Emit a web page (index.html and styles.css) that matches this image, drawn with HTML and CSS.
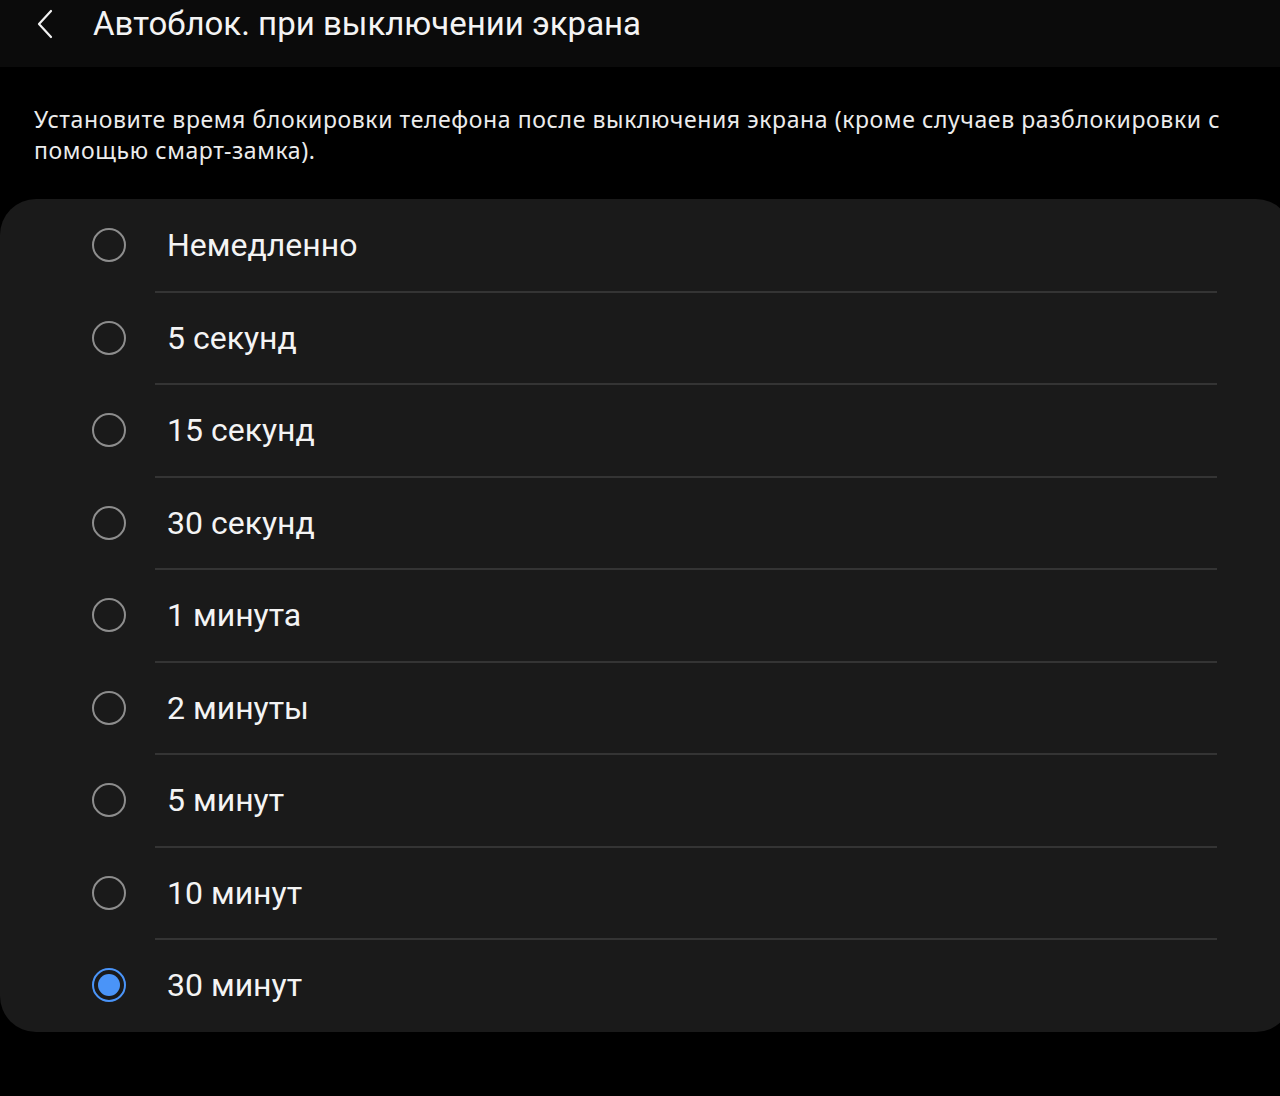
FILE: index.html
```html
<!DOCTYPE html>
<html lang="ru">
<head>
    <meta charset="UTF-8">
    <meta name="viewport" content="width=device-width, initial-scale=1.0">
    <title>Автоблок. при выключении экрана</title>
    <link rel="stylesheet" href="styles.css">
</head>
<body>
    <div class="header">
        <button class="back" aria-label="Назад">
            <svg width="20" height="30" viewBox="0 0 20 30">
                <path d="M16 2 L4 15 L16 28" fill="none" stroke="#f2f2f2" stroke-width="2.2" stroke-linecap="round" stroke-linejoin="round"/>
            </svg>
        </button>
        <h1>Автоблок. при выключении экрана</h1>
    </div>

    <p class="description">Установите время блокировки телефона после выключения экрана (кроме случаев разблокировки с помощью смарт-замка).</p>

    <div class="card">
        <label class="option"><span class="radio"></span><span class="label">Немедленно</span></label>
        <label class="option"><span class="radio"></span><span class="label">5 секунд</span></label>
        <label class="option"><span class="radio"></span><span class="label">15 секунд</span></label>
        <label class="option"><span class="radio"></span><span class="label">30 секунд</span></label>
        <label class="option"><span class="radio"></span><span class="label">1 минута</span></label>
        <label class="option"><span class="radio"></span><span class="label">2 минуты</span></label>
        <label class="option"><span class="radio"></span><span class="label">5 минут</span></label>
        <label class="option"><span class="radio"></span><span class="label">10 минут</span></label>
        <label class="option checked"><span class="radio"></span><span class="label">30 минут</span></label>
    </div>
</body>
</html>
```

FILE: styles.css
```css
:root {
    --background-color: #000000;
    --header-background: #0b0b0b;
    --card-background: #1a1a1a;
    --divider: #343434;
    --text: #f4f4f4;
    --accent: #4a94f8;
}

body {
    font-family: Roboto, "Noto Sans", sans-serif;
    margin: 0;
    padding: 0;
    background-color: var(--background-color);
    color: var(--text);
    overflow: hidden;
}

.header {
    height: 67px;
    background: var(--header-background);
    display: flex;
    align-items: center;
    padding-left: 35px;
    box-sizing: border-box;
}

.header .back {
    background: none;
    border: none;
    padding: 0;
    margin: 0 38px 0 0;
    width: 20px;
    height: 30px;
    margin-top: -20px;
    cursor: pointer;
}

.header h1 {
    font-size: 33px;
    font-weight: 400;
    margin: -20px 0 0 0;
}

.description {
    margin: 0;
    padding: 37px 40px 0 34px;
    height: 95px;
    font-family: "Noto Sans", Roboto, sans-serif;
    font-size: 23px;
    letter-spacing: 0.6px;
    line-height: 31px;
    color: #ececec;
}

.card {
    background: var(--card-background);
    border-radius: 36px;
    width: calc(100% + 12px);
}

.option {
    height: 92.5px;
    display: flex;
    align-items: center;
    padding-left: 92px;
    position: relative;
    cursor: pointer;
}

.option + .option::before {
    content: "";
    position: absolute;
    top: -1px;
    left: 155px;
    right: 75px;
    height: 2px;
    background: var(--divider);
}

.radio {
    width: 34px;
    height: 34px;
    box-sizing: border-box;
    border: 2px solid #8d8d8d;
    border-radius: 50%;
    margin-right: 41px;
    display: flex;
    align-items: center;
    justify-content: center;
}

.option.checked .radio {
    border-color: var(--accent);
}

.option.checked .radio::after {
    content: "";
    width: 22px;
    height: 22px;
    border-radius: 50%;
    background: var(--accent);
}

.label {
    font-size: 32px;
}
```
